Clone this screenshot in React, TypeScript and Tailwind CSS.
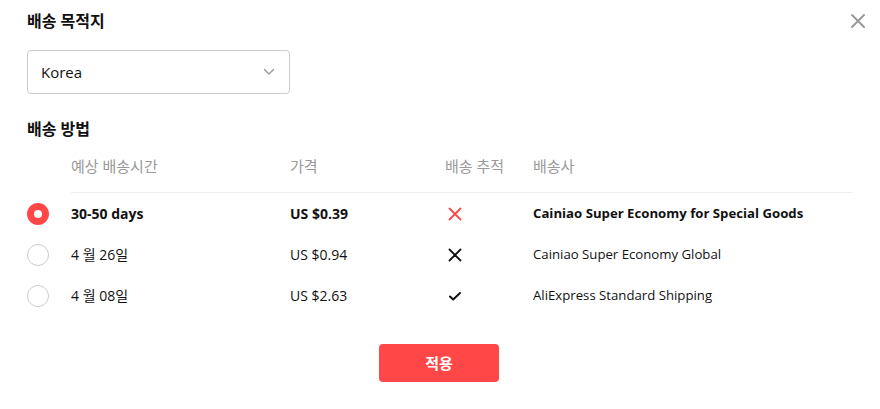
import React, { useState } from 'react';

type Row = {
  time: string;
  price: string;
  tracking: 'red-x' | 'x' | 'check';
  carrier: string;
};

const rows: Row[] = [
  { time: '30-50 days', price: 'US $0.39', tracking: 'red-x', carrier: 'Cainiao Super Economy for Special Goods' },
  { time: '4 월 26일', price: 'US $0.94', tracking: 'x', carrier: 'Cainiao Super Economy Global' },
  { time: '4 월 08일', price: 'US $2.63', tracking: 'check', carrier: 'AliExpress Standard Shipping' },
];

const TrackIcon = ({ kind }: { kind: Row['tracking'] }) => {
  if (kind === 'check') {
    return (
      <svg width="14" height="14" viewBox="0 0 14 14" fill="none">
        <path d="M2 7.5l3.2 3L12 4" stroke="#111" strokeWidth="2" strokeLinecap="round" strokeLinejoin="round" />
      </svg>
    );
  }
  const color = kind === 'red-x' ? '#ff4747' : '#111';
  return (
    <svg width="14" height="14" viewBox="0 0 14 14" fill="none">
      <path d="M1.5 1.5l11 11M12.5 1.5l-11 11" stroke={color} strokeWidth="1.8" strokeLinecap="round" />
    </svg>
  );
};

const App: React.FC = () => {
  const [selected, setSelected] = useState(0);

  return (
    <div
      className="w-[880px] h-[409px] bg-white text-[#111] relative"
      style={{ fontFamily: '"Open Sans", "Noto Sans CJK KR", sans-serif' }}
    >
      <button className="absolute right-[13px] top-[12px] w-[18px] h-[18px] flex items-center justify-center">
        <svg width="16" height="16" viewBox="0 0 16 16" fill="none">
          <path d="M2 2l12 12M14 2L2 14" stroke="#999" strokeWidth="2" strokeLinecap="round" />
        </svg>
      </button>

      <div className="pl-[27px] pr-[28px] pt-[10px]">
        <h2 className="text-[16px] font-bold leading-[22px]">배송 목적지</h2>

        <div className="mt-[18px] w-[263px] h-[44px] border border-[#ccc] rounded-[4px] flex items-center justify-between pl-[13px] pr-[14px]">
          <span className="text-[15px]">Korea</span>
          <svg width="12" height="8" viewBox="0 0 12 8" fill="none">
            <path d="M1.5 1.5L6 6l4.5-4.5" stroke="#999" strokeWidth="1.4" strokeLinecap="round" strokeLinejoin="round" />
          </svg>
        </div>

        <h2 className="mt-[24px] text-[16px] font-bold leading-[22px]">배송 방법</h2>

        <div className="mt-[16px] ml-[44px] flex items-center h-[20px] leading-[20px] text-[15px] text-[#999] border-b border-[#eee] pb-[16px] box-content">
          <span className="w-[219px]">예상 배송시간</span>
          <span className="w-[155px]">가격</span>
          <span className="w-[88px]">배송 추적</span>
          <span>배송사</span>
        </div>

        {rows.map((r, i) => {
          const active = selected === i;
          return (
            <div
              key={i}
              className={`flex items-center h-[41px] cursor-pointer ${active ? 'font-bold' : ''}`}
              onClick={() => setSelected(i)}
            >
              <span className="w-[44px] flex">
                {active ? (
                  <span className="w-[22px] h-[22px] rounded-full bg-[#ff4747] flex items-center justify-center">
                    <span className="w-[8px] h-[8px] rounded-full bg-white" />
                  </span>
                ) : (
                  <span className="w-[22px] h-[22px] rounded-full border border-[#ccc]" />
                )}
              </span>
              <span className="w-[219px] text-[14px]">{r.time}</span>
              <span className="w-[155px] text-[14px]">{r.price}</span>
              <span className="w-[88px] flex pl-[3px]">
                <TrackIcon kind={r.tracking} />
              </span>
              <span className="text-[13.2px]">{r.carrier}</span>
            </div>
          );
        })}

        <div className="flex justify-center mt-[28px]">
          <button className="w-[120px] h-[38px] rounded-[4px] bg-[#ff4747] text-white text-[15px] font-bold ml-[-1px]">
            적용
          </button>
        </div>
      </div>
    </div>
  );
};

export default App;
